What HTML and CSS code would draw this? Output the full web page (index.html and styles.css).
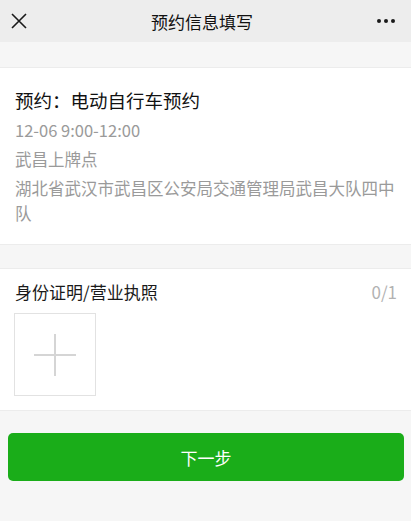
FILE: index.html
```html
<!DOCTYPE html>
<html lang="zh-CN">
<head>
  <meta charset="UTF-8">
  <title>预约信息填写</title>
  <link rel="stylesheet" href="styles.css">
</head>
<body>

  <div class="entete">
    <span class="fermer">
      <svg width="16" height="16" viewBox="0 0 16 16">
        <path d="M1 1 L15 15 M15 1 L1 15" stroke="#1a1a1a" stroke-width="1.6" fill="none"/>
      </svg>
    </span>
    <h1>预约信息填写</h1>
    <span class="plus">
      <i></i><i></i><i></i>
    </span>
  </div>

  <div class="bloc infos">
    <h2>预约：电动自行车预约</h2>
    <p class="ligne">12-06 9:00-12:00</p>
    <p class="ligne">武昌上牌点</p>
    <p class="adresse">湖北省武汉市武昌区公安局交通管理局武昌大队四中队</p>
  </div>

  <div class="bloc piece">
    <div class="piece-titre">
      <span>身份证明/营业执照</span>
      <span class="compteur">0/1</span>
    </div>
    <div class="ajout">
      <svg width="44" height="44" viewBox="0 0 44 44">
        <path d="M1 22 H43 M22 1 V43" stroke="#d5d5d5" stroke-width="2" fill="none"/>
      </svg>
    </div>
  </div>

  <div class="actions">
    <button>下一步</button>
  </div>

</body>
</html>
```

FILE: styles.css
```css
body {
  font-family: "Noto Sans CJK SC", "Noto Sans", sans-serif;
  margin: 0;
  background: #f6f6f6;
  color: #111;
  height: 521px;
  overflow: hidden;
}

.entete {
  height: 42px;
  background: #ededed;
  display: flex;
  align-items: center;
  justify-content: space-between;
  padding: 0 16px 0 11px;
  margin-bottom: 25px;
}

.entete h1 {
  margin: 0;
  font-size: 17px;
  font-weight: normal;
  color: #111;
}

.fermer {
  display: flex;
  width: 16px;
  height: 16px;
}

.plus {
  display: flex;
  gap: 3px;
  width: 18px;
}

.plus i {
  width: 4px;
  height: 4px;
  border-radius: 50%;
  background: #1a1a1a;
}

.bloc {
  background: #fff;
  border-top: 1px solid #ececec;
  border-bottom: 1px solid #ececec;
  padding: 0 15px;
}

.infos {
  padding-top: 16px;
  padding-bottom: 18px;
  margin-bottom: 23px;
}

.infos h2 {
  margin: 0;
  font-size: 18.5px;
  font-weight: normal;
  line-height: 32px;
  color: #111;
}

.ligne, .adresse {
  margin: 0;
  font-size: 16.5px;
  color: #9a9a9a;
}

.ligne {
  line-height: 29px;
}

.adresse {
  line-height: 25px;
  margin-top: 2px;
}

.piece {
  padding-top: 11px;
  padding-bottom: 14px;
}

.piece-titre {
  display: flex;
  justify-content: space-between;
  align-items: center;
  font-size: 17px;
  line-height: 24px;
  color: #1a1a1a;
}

.compteur {
  color: #b2b2b2;
  margin-right: -1px;
}

.ajout {
  width: 80px;
  height: 81px;
  margin-top: 9px;
  margin-left: -1px;
  border: 1px solid #e2e2e2;
  display: flex;
  align-items: center;
  justify-content: center;
}

.actions {
  padding: 22px 7px 0 8px;
}

button {
  width: 100%;
  height: 48px;
  background: #1aad19;
  color: #fff;
  border: none;
  border-radius: 5px;
  font-family: inherit;
  font-size: 17px;
  cursor: pointer;
}
```
